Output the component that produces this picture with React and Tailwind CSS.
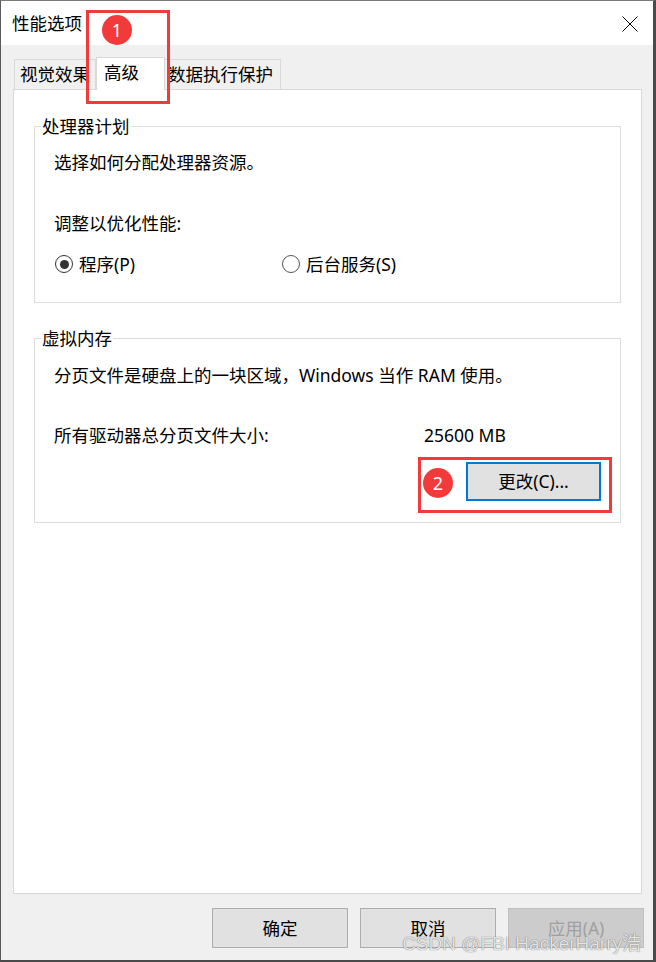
import React from "react";

function Radio({ checked, label }) {
    return (
        <div className="flex items-center gap-[6px]">
            <span
                className={
                    checked
                        ? "ml-[1px] w-[18px] h-[18px] rounded-full border border-[#333333] bg-white flex items-center justify-center"
                        : "ml-[1px] w-[18px] h-[18px] rounded-full border border-[#555555] bg-white flex items-center justify-center"
                }
            >
                {checked && <span className="w-[9px] h-[9px] rounded-full bg-[#333333]" />}
            </span>
            <span>{label}</span>
        </div>
    );
}

function Button({ children, disabled }) {
    return (
        <button
            className={
                disabled
                    ? "w-[136px] h-[40px] bg-[#cccccc] border border-[#bfbfbf] text-[#a0a0a0]"
                    : "w-[136px] h-[40px] bg-[#e1e1e1] border border-[#adadad] text-black"
            }
        >
            {children}
        </button>
    );
}

function Group({ title, children }) {
    return (
        <fieldset className="border border-[#dcdcdc] pb-0">
            <legend className="ml-[6px] px-[1px] leading-[20px]">{title}</legend>
            {children}
        </fieldset>
    );
}

export default function App() {
    return (
        <div className="relative w-[656px] h-[962px] flex flex-col bg-[#f0f0f0] border-l border-l-[#5a5a5a] border-t border-t-[#7a7a7a] border-r-[3px] border-r-[#4a4a4a] border-b-[2px] border-b-[#4a4a4a] text-[17.5px] text-black font-['Noto_Sans','Noto_Sans_CJK_SC',sans-serif] overflow-hidden">
            {/* title bar */}
            <div className="h-[44px] bg-white flex items-center justify-between pl-[11px] pr-[15px]">
                <span className="leading-[24px]">性能选项</span>
                <svg width="16" height="16" viewBox="0 0 16 16" className="mt-[1px]">
                    <path d="M0.5 0.5 L15.5 15.5 M15.5 0.5 L0.5 15.5" stroke="#000" strokeWidth="1" fill="none" />
                </svg>
            </div>

            {/* body */}
            <div className="flex-1 flex flex-col pl-[12px] pr-[11px] pt-[12px]">
                {/* tabs */}
                <div className="h-[32px] flex items-end pl-[1px]">
                    <div className="w-[82px] h-[30px] border border-b-0 border-[#d9d9d9] bg-[#f0f0f0] pl-[5px] leading-[28px]">
                        视觉效果
                    </div>
                    <div className="relative z-10 w-[69px] h-[33px] -mb-px border border-b-0 border-[#d9d9d9] bg-white pl-[7px] leading-[28px]">
                        高级
                    </div>
                    <div className="w-[116px] h-[30px] border border-b-0 border-l-0 border-[#d9d9d9] bg-[#f0f0f0] pl-[3px] leading-[28px]">
                        数据执行保护
                    </div>
                </div>

                {/* panel */}
                <div className="h-[805px] bg-white border border-[#d9d9d9] px-[20px] pt-[26px]">
                    <Group title="处理器计划">
                        <div className="px-[19px] pb-[26px]">
                            <p className="mt-[14px] leading-[24px]">选择如何分配处理器资源。</p>
                            <p className="mt-[37px] leading-[24px]">调整以优化性能:</p>
                            <div className="mt-[17px] h-[24px] flex items-center">
                                <div className="w-[227px]">
                                    <Radio checked label="程序(P)" />
                                </div>
                                <Radio label="后台服务(S)" />
                            </div>
                        </div>
                    </Group>

                    <div className="mt-[25px]">
                        <Group title="虚拟内存">
                            <div className="px-[19px] pb-[21px]">
                                <p className="mt-[15px] leading-[24px]">分页文件是硬盘上的一块区域，Windows 当作 RAM 使用。</p>
                                <div className="mt-[36px] flex leading-[24px]">
                                    <span className="w-[370px]">所有驱动器总分页文件大小:</span>
                                    <span>25600 MB</span>
                                </div>
                                <div className="mt-[15px] flex justify-end">
                                    <button className="w-[135px] h-[39px] bg-[#e1e1e1] border-2 border-[#0078d7]">
                                        更改(C)...
                                    </button>
                                </div>
                            </div>
                        </Group>
                    </div>
                </div>

                {/* dialog buttons */}
                <div className="mt-[14px] -mr-[2px] flex justify-end gap-[12px]">
                    <Button>确定</Button>
                    <Button>取消</Button>
                    <Button disabled>应用(A)</Button>
                </div>
            </div>

            {/* annotations */}
            <div className="absolute left-[85px] top-[9px] w-[84px] h-[94px] border-[3px] border-[#f23a3a]" />
            <div className="absolute left-[101px] top-[14px] w-[30px] h-[30px] rounded-full bg-[#f23a3a] text-white text-[18px] leading-[30px] text-center">
                1
            </div>
            <div className="absolute left-[417px] top-[456px] w-[194px] h-[56px] border-[3px] border-[#f23a3a]" />
            <div className="absolute left-[422px] top-[467px] w-[30px] h-[30px] rounded-full bg-[#f23a3a] text-white text-[18px] leading-[30px] text-center">
                2
            </div>

            {/* watermark */}
            <div className="absolute right-[12px] bottom-[4px] text-[19px] leading-[24px] text-white/85 [text-shadow:0_0_1px_rgba(0,0,0,0.75)] font-['Liberation_Sans','Noto_Sans_CJK_SC',sans-serif]">
                CSDN @FBI HackerHarry浩
            </div>
        </div>
    );
}
